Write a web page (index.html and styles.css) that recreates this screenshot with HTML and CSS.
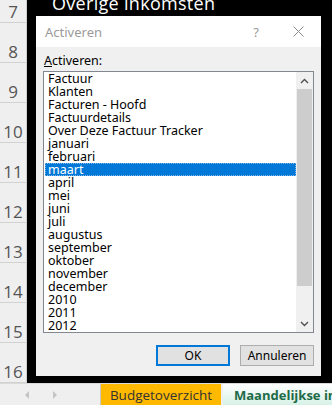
FILE: index.html
```html
<!DOCTYPE html>
<html>
<head>
<meta charset="utf-8">
<link rel="stylesheet" href="styles.css">
</head>
<body>
<div class="app">
  <div class="sheet">
    <div class="rowheads">
      <div class="rh">7</div>
      <div class="rh">8</div>
      <div class="rh">9</div>
      <div class="rh">10</div>
      <div class="rh">11</div>
      <div class="rh">12</div>
      <div class="rh">13</div>
      <div class="rh">14</div>
      <div class="rh">15</div>
      <div class="rh">16</div>
    </div>
    <div class="grid">
      <div class="heading">Overige inkomsten</div>
    </div>
  </div>
  <div class="tabbar">
    <div class="navs">
      <span class="nav nav-left"></span>
      <span class="nav nav-right"></span>
    </div>
    <div class="tab tab-budget">Budgetoverzicht</div>
    <div class="tab tab-month">Maandelijkse in</div>
  </div>

  <div class="dialog">
    <div class="titlebar">
      <span class="title">Activeren</span>
      <span class="help">?</span>
      <span class="close">
        <svg width="11" height="11" viewBox="0 0 11 11"><path d="M0.5 0.5 L10.5 10.5 M10.5 0.5 L0.5 10.5" stroke="#8a8a8a" stroke-width="1" fill="none"/></svg>
      </span>
    </div>
    <div class="body">
      <div class="label"><u>A</u>ctiveren:</div>
      <div class="listbox">
        <ul class="items">
          <li>Factuur</li>
          <li>Klanten</li>
          <li>Facturen - Hoofd</li>
          <li>Factuurdetails</li>
          <li>Over Deze Factuur Tracker</li>
          <li>januari</li>
          <li>februari</li>
          <li class="sel">maart</li>
          <li>april</li>
          <li>mei</li>
          <li>juni</li>
          <li>juli</li>
          <li>augustus</li>
          <li>september</li>
          <li>oktober</li>
          <li>november</li>
          <li>december</li>
          <li>2010</li>
          <li>2011</li>
          <li>2012</li>
        </ul>
        <div class="scrollbar">
          <div class="sb-btn">
            <svg width="9" height="6" viewBox="0 0 9 6"><path d="M1 5 L4.5 1.5 L8 5" stroke="#505050" stroke-width="1.4" fill="none"/></svg>
          </div>
          <div class="sb-track"><div class="sb-thumb"></div></div>
          <div class="sb-btn">
            <svg width="9" height="6" viewBox="0 0 9 6"><path d="M1 1 L4.5 4.5 L8 1" stroke="#505050" stroke-width="1.4" fill="none"/></svg>
          </div>
        </div>
      </div>
      <div class="buttons">
        <button class="btn btn-ok">OK</button>
        <button class="btn">Annuleren</button>
      </div>
    </div>
  </div>
</div>
</body>
</html>
```

FILE: styles.css
```css
* { box-sizing: border-box; }
html, body { margin: 0; padding: 0; }
body {
  width: 332px;
  height: 405px;
  overflow: hidden;
  font-family: "Noto Sans", "Open Sans", sans-serif;
  background: #000;
}
.app {
  position: relative;
  width: 332px;
  height: 405px;
  display: flex;
  flex-direction: column;
}
.sheet {
  height: 383px;
  display: flex;
  overflow: hidden;
  background: #000;
}
.rowheads {
  width: 27px;
  flex: none;
  background: #efefef;
  border-right: 1px solid #cfcfcf;
  margin-top: -17px;
  display: flex;
  flex-direction: column;
}
.rh {
  height: 40px;
  flex: none;
  border-bottom: 1px solid #d2d2d2;
  display: flex;
  align-items: flex-end;
  justify-content: center;
  padding-bottom: 2px;
  font-family: "Open Sans", "Noto Sans", sans-serif;
  font-size: 17px;
  line-height: 17px;
  color: #555;
}
.grid {
  flex: 1;
  background: #000;
}
.heading {
  color: #fff;
  font-family: "Open Sans", sans-serif;
  font-size: 18px;
  line-height: 18px;
  margin-top: -6px;
  padding-left: 25px;
  letter-spacing: 0.3px;
}
.tabbar {
  height: 22px;
  flex: none;
  background: #efefef;
  border-top: 1px solid #dadada;
  display: flex;
  align-items: stretch;
}
.navs {
  width: 101px;
  flex: none;
  border-right: 1px solid #c8c8c8;
  display: flex;
  align-items: center;
  padding-left: 25px;
  gap: 24px;
}
.nav {
  width: 0;
  height: 0;
  border-top: 4px solid transparent;
  border-bottom: 4px solid transparent;
}
.nav-left { border-right: 4px solid #c4c4c4; }
.nav-right { border-left: 4px solid #c4c4c4; }
.tab {
  display: flex;
  align-items: center;
  white-space: nowrap;
}
.tab-budget {
  width: 120px;
  background: #ffb900;
  color: #333;
  justify-content: center;
  font-family: "Open Sans", sans-serif;
  font-size: 13.5px;
}
.tab-month {
  flex: 1;
  margin-left: 2px;
  padding-left: 11px;
  background: linear-gradient(#ffffff, #d6f1e6);
  color: #1e6b48;
  font-weight: bold;
  font-size: 13px;
  font-family: "Open Sans", sans-serif;
  overflow: hidden;
}

/* dialog */
.dialog {
  position: absolute;
  left: 36px;
  top: 16px;
  width: 285px;
  height: 360px;
  background: #f0f0f0;
  display: flex;
  flex-direction: column;
}
.titlebar {
  height: 31px;
  flex: none;
  background: #fff;
  display: flex;
  align-items: center;
  padding-left: 9px;
}
.title {
  flex: 1;
  color: #9a9a9a;
  font-size: 13px;
}
.help {
  color: #9a9a9a;
  font-size: 13px;
  margin-right: 34px;
}
.close {
  display: flex;
  margin-right: 17px;
}
.body {
  flex: 1;
  display: flex;
  flex-direction: column;
  padding: 0 7px 0 7px;
}
.label {
  height: 24px;
  font-size: 12.5px;
  line-height: 14px;
  padding-top: 7px;
  padding-left: 1px;
  color: #000;
}
.label u { text-decoration-thickness: 1px; text-underline-offset: 1px; }
.listbox {
  height: 262px;
  width: 271px;
  border: 1px solid #828790;
  background: #fff;
  display: flex;
}
.items {
  list-style: none;
  margin: 0;
  padding: 0 0 0 1px;
  flex: 1;
}
.items li {
  height: 13px;
  line-height: 13px;
  font-size: 12.5px;
  padding-left: 3px;
  color: #000;
  white-space: nowrap;
}
.items li.sel {
  background: #0078d7;
  color: #fff;
  outline: 1px dotted #7fb7e8;
  outline-offset: -1px;
}
.scrollbar {
  width: 17px;
  flex: none;
  background: #f0f0f0;
  display: flex;
  flex-direction: column;
}
.sb-btn {
  height: 17px;
  display: flex;
  align-items: center;
  justify-content: center;
}
.sb-track {
  flex: 1;
  display: flex;
  flex-direction: column;
}
.sb-thumb {
  height: 197px;
  margin: 0 1px;
  background: #cdcdcd;
}
.buttons {
  display: flex;
  justify-content: flex-end;
  gap: 10px;
  margin-top: 12px;
}
.btn {
  width: 74px;
  height: 21px;
  font-family: "Noto Sans", sans-serif;
  font-size: 12px;
  line-height: 17px;
  background: #e1e1e1;
  border: 1px solid #adadad;
  color: #000;
  padding: 0;
}
.btn-ok {
  border: 2px solid #0078d7;
}
```
